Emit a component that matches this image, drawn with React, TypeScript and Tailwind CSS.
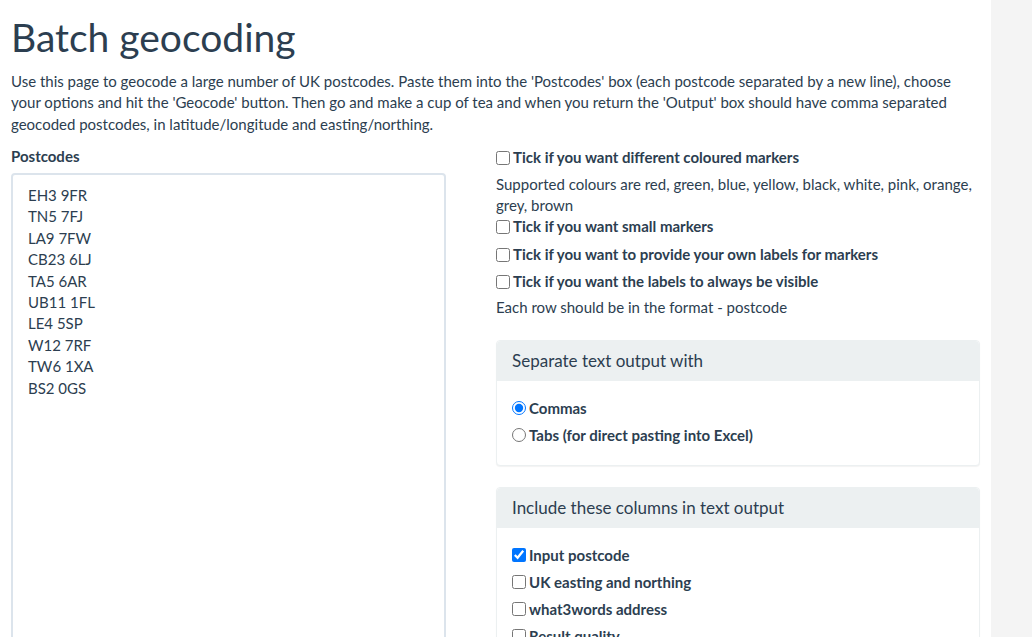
import React from "react";

const postcodes = [
  "EH3 9FR",
  "TN5 7FJ",
  "LA9 7FW",
  "CB23 6LJ",
  "TA5 6AR",
  "UB11 1FL",
  "LE4 5SP",
  "W12 7RF",
  "TW6 1XA",
  "BS2 0GS",
];

const CheckRow: React.FC<{ label: string; checked?: boolean; className?: string }> = ({
  label,
  checked,
  className = "",
}) => (
  <label className={`flex items-center font-bold leading-[21px] ${className}`}>
    <input
      type="checkbox"
      defaultChecked={checked}
      className="m-0 mr-[3px] h-[14px] w-[14px]"
    />
    {label}
  </label>
);

const RadioRow: React.FC<{ label: string; checked?: boolean; className?: string }> = ({
  label,
  checked,
  className = "",
}) => (
  <label className={`flex items-center font-bold leading-[21px] ${className}`}>
    <input
      type="radio"
      name="sep"
      defaultChecked={checked}
      className="m-0 mr-[3px] h-[14px] w-[14px]"
    />
    {label}
  </label>
);

const Panel: React.FC<{ title: string; children: React.ReactNode; className?: string }> = ({
  title,
  children,
  className = "",
}) => (
  <div
    className={`rounded-[4px] border border-[#ecf0f1] bg-white shadow-[0_1px_1px_rgba(0,0,0,0.05)] ${className}`}
  >
    <div className="h-[40px] rounded-t-[4px] bg-[#ecf0f1] px-[15px] pt-[9px] text-[17px] leading-[21px]">
      {title}
    </div>
    <div className="px-[15px] pt-[17px] pb-[19px]">{children}</div>
  </div>
);

export default function App() {
  return (
    <div className="flex min-h-[637px] font-['Lato',sans-serif] text-[15px] leading-[21.43px] text-[#2c3e50]">
      <div className="w-[991px] overflow-hidden bg-white px-[11px]">
        <h1 className="mt-[16px] mb-[12px] text-[39px] leading-[43px]">Batch geocoding</h1>
        <p className="mb-[11px] w-[950px]">
          Use this page to geocode a large number of UK postcodes. Paste them into the
          'Postcodes' box (each postcode separated by a new line), choose your options and hit
          the 'Geocode' button. Then go and make a cup of tea and when you return the 'Output'
          box should have comma separated geocoded postcodes, in latitude/longitude and
          easting/northing.
        </p>

        <div className="flex gap-[15px]">
          <div className="w-[470px] shrink-0">
            <div className="mb-[5px] font-bold">Postcodes</div>
            <textarea
              defaultValue={postcodes.join("\n")}
              className="block h-[480px] w-[435px] resize-none rounded-[4px] border-2 border-[#dce4ec] px-[15px] py-[10px] leading-[21.43px] text-[#2c3e50] outline-none"
            />
          </div>

          <div className="flex-1 pt-[1px]">
            <CheckRow label="Tick if you want different coloured markers" />
            <p className="mt-[6px] leading-[21px]">
              Supported colours are red, green, blue, yellow, black, white, pink, orange, grey,
              brown
            </p>
            <CheckRow label="Tick if you want small markers" />
            <CheckRow label="Tick if you want to provide your own labels for markers" className="mt-[7px]" />
            <CheckRow label="Tick if you want the labels to always be visible" className="mt-[6px]" />
            <p className="mt-[5px]">Each row should be in the format - postcode</p>

            <Panel title="Separate text output with" className="mt-[21px]">
              <RadioRow label="Commas" checked />
              <RadioRow label="Tabs (for direct pasting into Excel)" className="mt-[6px]" />
            </Panel>

            <Panel title="Include these columns in text output" className="mt-[21px]">
              <CheckRow label="Input postcode" checked />
              <CheckRow label="UK easting and northing" className="mt-[6px]" />
              <CheckRow label="what3words address" className="mt-[6px]" />
              <CheckRow label="Result quality" className="mt-[6px]" />
            </Panel>
          </div>
        </div>
      </div>
      <div className="flex-1 bg-[#f4f4f4]" />
    </div>
  );
}
